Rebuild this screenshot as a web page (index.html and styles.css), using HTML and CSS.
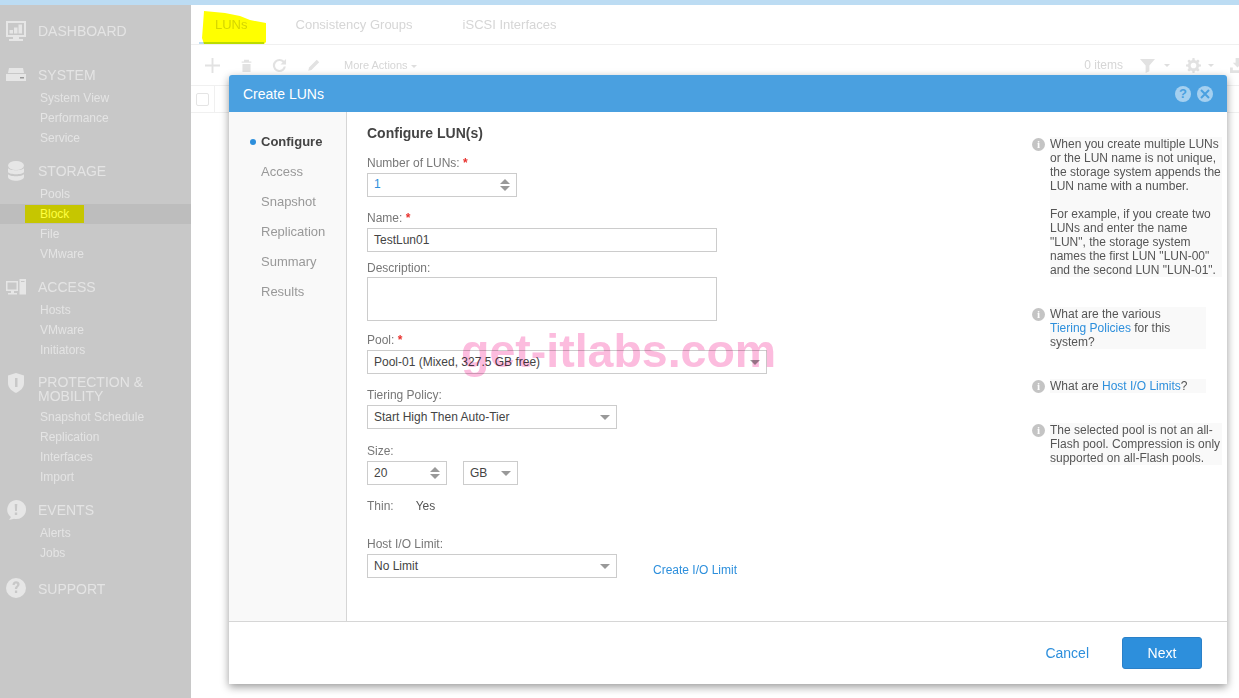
FILE: index.html
```html
<!DOCTYPE html>
<html lang="en">

<head>
  <meta charset="UTF-8">
  <meta name="viewport" content="width=device-width, initial-scale=1.0">
  <title>Create LUNs</title>
  <link rel="stylesheet" href="styles.css">
</head>

<body>
  <div class="top-strip"></div>

  <div class="page">
    <!-- left menu -->
    <nav class="sidebar">
      <div class="menu-section section-lone">
        <div class="menu-head">
          <svg class="menu-icon" viewBox="0 0 20 20"><path d="M0 0h20v16h-7v2h4v2H3v-2h4v-2H0zM2 2v12h16V2zM3.500 12.500V9h3.500v3.500zM8 12.500V6.500h3.500v6zM12.500 12.500V3.500H16v9z" fill-rule="evenodd"/></svg>
          <span>DASHBOARD</span>
        </div>
      </div>
      <div class="menu-section">
        <div class="menu-head">
          <svg class="menu-icon" viewBox="0 0 20 20"><path d="M3 3h14l1 5H2zM0 9h20v7H0z"/><rect x="14" y="12" width="4" height="1.500" fill="#999"/></svg>
          <span>SYSTEM</span>
        </div>
        <a class="menu-item">System View</a>
        <a class="menu-item">Performance</a>
        <a class="menu-item">Service</a>
      </div>
      <div class="menu-section">
        <div class="menu-head">
          <svg class="menu-icon" viewBox="0 0 20 20"><ellipse cx="10" cy="4.500" rx="8" ry="4.500"/><path d="M2 7c1 3 15 3 16 0v4c-1 3-15 3-16 0zM2 13c1 3 15 3 16 0v3c-1 5-15 5-16 0z"/></svg>
          <span>STORAGE</span>
        </div>
        <a class="menu-item">Pools</a>
        <a class="menu-item menu-item-active">Block</a>
        <a class="menu-item">File</a>
        <a class="menu-item">VMware</a>
      </div>
      <div class="menu-section">
        <div class="menu-head">
          <svg class="menu-icon" viewBox="0 0 20 20"><path d="M0 4h12v10H8v2h3v1.500H2V16h3v-2H0zM1.500 5.500v7h9v-7z" fill-rule="evenodd"/><path d="M13.500 2H20v15.500h-6.500zM15 4v1h3.500V4z" fill-rule="evenodd"/></svg>
          <span>ACCESS</span>
        </div>
        <a class="menu-item">Hosts</a>
        <a class="menu-item">VMware</a>
        <a class="menu-item">Initiators</a>
      </div>
      <div class="menu-section section-wrap">
        <div class="menu-head">
          <svg class="menu-icon" viewBox="0 0 20 20"><path d="M2 2.500 10 0l8 2.500V10c0 5-4 8-8 10-4-2-8-5-8-10zM9 5v9h2.500V5z" fill-rule="evenodd"/></svg>
          <span>PROTECTION &amp; MOBILITY</span>
        </div>
        <a class="menu-item">Snapshot Schedule</a>
        <a class="menu-item">Replication</a>
        <a class="menu-item">Interfaces</a>
        <a class="menu-item">Import</a>
      </div>
      <div class="menu-section">
        <div class="menu-head">
          <svg class="menu-icon" viewBox="0 0 20 20"><path d="M10 0a10 9.500 0 1 1-2 18.800L3 20l2-3A9.500 9.500 0 0 1 10 0zM8.700 4l.4 7h1.800l.4-7zM8.800 12.500v2.500h2.400v-2.500z" fill-rule="evenodd"/></svg>
          <span>EVENTS</span>
        </div>
        <a class="menu-item">Alerts</a>
        <a class="menu-item">Jobs</a>
      </div>
      <div class="menu-section section-last">
        <div class="menu-head">
          <svg class="menu-icon" viewBox="0 0 20 20"><path d="M10 0a10 10 0 1 1 0 20 10 10 0 0 1 0-20zM6.500 7h2.300c0-1 .5-1.500 1.200-1.500s1.200.4 1.200 1.100c0 1.400-2.300 1.700-2.300 4.400h2.200c0-2 2.500-2.300 2.500-4.700 0-1.800-1.500-3-3.500-3-2.200 0-3.600 1.400-3.600 3.700zM8.900 12.500V15h2.300v-2.500z" fill-rule="evenodd"/></svg>
          <span>SUPPORT</span>
        </div>
      </div>
    </nav>

    <!-- page behind the dialog -->
    <main class="content">
      <div class="tabs">
        <a class="tab tab-active">LUNs</a>
        <a class="tab">Consistency Groups</a>
        <a class="tab">iSCSI Interfaces</a>
      </div>
      <div class="toolbar">
        <svg class="tool-icon" viewBox="0 0 16 16"><path d="M7 0h2v7h7v2H9v7H7V9H0V7h7z"/></svg>
        <svg class="tool-icon tool-small" viewBox="0 0 16 16"><path d="M5 1h6v2h3v1.500H2V3h3zM3 6h10v10H3z"/></svg>
        <svg class="tool-icon" viewBox="0 0 16 16"><path d="M8 1a7 7 0 0 1 5 2l2-2v6H9l2.300-2.300A4.700 4.700 0 1 0 12.500 9h2.300A7 7 0 1 1 8 1z"/></svg>
        <svg class="tool-icon tool-small" viewBox="0 0 16 16"><path d="M12 1l3 3-9.500 9.500-4 1 1-4z"/></svg>
        <span class="more-actions">More Actions <i class="caret"></i></span>
        <div class="toolbar-right">
          <span class="item-count">0 items</span>
          <svg class="tool-icon tool-filter" viewBox="0 0 16 16"><path d="M0 1h16L10 8v6l-4 2V8z"/></svg>
          <i class="caret"></i>
          <svg class="tool-icon tool-gear" viewBox="0 0 16 16"><path d="M7 0h2l.4 2.200 1.500.6L12.800 1.500l1.700 1.700-1.300 1.900.6 1.500 2.200.4v2l-2.200.4-.6 1.500 1.300 1.900-1.700 1.700-1.900-1.300-1.500.6L9 16H7l-.4-2.200-1.500-.6-1.900 1.300-1.700-1.700 1.300-1.900-.6-1.500L0 9V7l2.200-.4.600-1.500-1.300-1.900 1.700-1.700 1.900 1.300 1.500-.6zM8 5a3 3 0 1 0 0 6 3 3 0 0 0 0-6z" fill-rule="evenodd"/></svg>
          <i class="caret"></i>
          <svg class="tool-icon tool-export" viewBox="0 0 16 16"><path d="M6 0h4v5h3l-5 5-5-5h3zM0 10h3v3h10v-3h3v6H0z"/></svg>
        </div>
      </div>
      <div class="table-head">
        <div class="check-cell"><span class="checkbox"></span></div>
      </div>
    </main>
  </div>

  <!-- yellow marker strokes drawn over the screenshot -->
  <svg class="marker marker-tab" viewBox="0 0 67 35"><path d="M4 1 25 3 40 6 50 10 66 13 66 32 64 34H4L2 28 3 15z"/></svg>
  <div class="marker-block"><span>Block</span></div>

  <!-- Create LUNs dialog -->
  <section class="modal">
    <header class="modal-head">
      <h1>Create LUNs</h1>
      <div class="modal-tools">
        <span class="round-btn">?</span>
        <span class="round-btn round-close">
          <svg viewBox="0 0 10 10"><path d="M1 1l8 8M9 1L1 9"/></svg>
        </span>
      </div>
    </header>

    <div class="modal-body">
      <ul class="steps">
        <li class="step step-current">Configure</li>
        <li class="step">Access</li>
        <li class="step">Snapshot</li>
        <li class="step">Replication</li>
        <li class="step">Summary</li>
        <li class="step">Results</li>
      </ul>

      <form class="form">
        <h2>Configure LUN(s)</h2>

        <div class="field">
          <label>Number of LUNs: <b class="req">*</b></label>
          <div class="input w-150 input-blue">1<i class="spinner"></i></div>
        </div>
        <div class="field field-name">
          <label>Name: <b class="req">*</b></label>
          <div class="input w-350">TestLun01</div>
        </div>
        <div class="field field-desc">
          <label>Description:</label>
          <div class="input w-350 textarea"></div>
        </div>
        <div class="field field-pool">
          <label>Pool: <b class="req">*</b></label>
          <div class="input w-400 select">Pool-01 (Mixed, 327.5 GB free)</div>
        </div>
        <div class="field field-tier">
          <label>Tiering Policy:</label>
          <div class="input w-250 select">Start High Then Auto-Tier</div>
        </div>
        <div class="field">
          <label>Size:</label>
          <div class="size-row">
            <div class="input w-80">20<i class="spinner"></i></div>
            <div class="input w-55 select">GB</div>
          </div>
        </div>
        <div class="field field-thin">
          <label>Thin:</label>
          <span class="thin-value">Yes</span>
        </div>
        <div class="field">
          <label>Host I/O Limit:</label>
          <div class="limit-row">
            <div class="input w-250 select">No Limit</div>
            <a class="link limit-link">Create I/O Limit</a>
          </div>
        </div>
      </form>

      <aside class="help">
        <div class="help-item">
          <span class="info">i</span>
          <div class="help-text">When you create multiple LUNs or the LUN name is not unique, the storage system appends the LUN name with a number.<br><br>For example, if you create two LUNs and enter the name "LUN", the storage system names the first LUN "LUN-00" and the second LUN "LUN-01".</div>
        </div>
        <div class="help-item">
          <span class="info">i</span>
          <div class="help-text help-short">What are the various<br><a class="link">Tiering Policies</a> for this system?</div>
        </div>
        <div class="help-item">
          <span class="info">i</span>
          <div class="help-text help-short">What are <a class="link">Host I/O Limits</a>?</div>
        </div>
        <div class="help-item">
          <span class="info">i</span>
          <div class="help-text">The selected pool is not an all-Flash pool. Compression is only supported on all-Flash pools.</div>
        </div>
      </aside>
    </div>

    <footer class="modal-foot">
      <a class="cancel">Cancel</a>
      <button class="next" type="button">Next</button>
    </footer>
  </section>

  <div class="watermark">get-itlabs.com</div>
</body>

</html>
```

FILE: styles.css
```css
body {
  font-family: "Liberation Sans", Arial, sans-serif;
  margin: 0;
  padding: 0;
  width: 1239px;
  height: 698px;
  overflow: hidden;
  background: #fff;
  position: relative;
}

.top-strip {
  height: 5px;
  background-color: #bcdcf3;
}

.page {
  display: flex;
  height: 693px;
}

/* Sidebar */
.sidebar {
  width: 191px;
  flex: none;
  background-color: #c8c8c8;
  padding-top: 16px;
  box-sizing: border-box;
}

.menu-section {
  margin-bottom: 13px;
}

.section-lone {
  margin-bottom: 24px;
}

.menu-head {
  display: flex;
  align-items: center;
  height: 20px;
  margin-bottom: 3px;
  padding-left: 6px;
  font-size: 14px;
  color: #e4e4e4;
}

.menu-head span {
  margin-left: 12px;
}

.menu-icon {
  width: 20px;
  height: 20px;
  fill: #e6e6e6;
  flex: none;
}

.section-wrap {
  margin-top: 15px;
}

.section-wrap .menu-head {
  height: 28px;
  line-height: 14px;
  margin-bottom: 4px;
  align-items: flex-start;
}

.section-wrap .menu-head span {
  width: 140px;
}

.section-wrap .menu-icon {
  margin-top: -2px;
}

.section-last {
  margin-top: 16px;
}

.section-last .menu-icon {
  margin-top: -2px;
}

.menu-item {
  display: block;
  height: 20px;
  line-height: 20px;
  padding-left: 40px;
  font-size: 12px;
  color: #e4e4e4;
}

.menu-item-active {
  background-color: #bdbdbd;
}

/* Page behind the dialog */
.content {
  flex: 1;
  background-color: #fff;
}

.tabs {
  display: flex;
  height: 39px;
  border-bottom: 1px solid #f0f0f0;
  padding-left: 8px;
}

.tab {
  line-height: 40px;
  color: #d6d6d6;
  padding: 0 16px;
  margin-right: 18px;
  font-size: 13px;
}

.tab-active {
  height: 37px;
  border-bottom: 2px solid #bcdcf3;
  margin-right: 16px;
}

.toolbar {
  display: flex;
  align-items: center;
  height: 40px;
  padding-left: 14px;
  border-bottom: 1px solid #f0f0f0;
}

.tool-icon {
  width: 15px;
  height: 15px;
  fill: #e2e2e2;
  margin-right: 19px;
  flex: none;
}

.tool-small {
  width: 13px;
  height: 13px;
  margin-left: 1px;
}

.more-actions {
  font-size: 11px;
  color: #d6d6d6;
  margin-left: 5px;
}

.caret {
  display: inline-block;
  width: 0;
  height: 0;
  border-left: 3px solid transparent;
  border-right: 3px solid transparent;
  border-top: 3px solid #dedede;
  vertical-align: middle;
}

.toolbar-right {
  display: flex;
  align-items: center;
  margin-left: auto;
  margin-right: -6px;
}

.item-count {
  font-size: 12px;
  color: #d6d6d6;
  margin-right: 17px;
}

.tool-filter {
  margin-right: 9px;
}

.tool-gear {
  margin: 0 7px 0 16px;
}

.tool-export {
  margin: 0 0 0 16px;
}

.table-head {
  display: flex;
  height: 26px;
  border-bottom: 1px solid #f0f0f0;
}

.check-cell {
  width: 24px;
  display: flex;
  align-items: center;
  justify-content: center;
  border-right: 1px solid #f0f0f0;
  box-sizing: border-box;
}

.checkbox {
  width: 11px;
  height: 11px;
  border: 1px solid #e4e4e4;
  border-radius: 2px;
}

/* Yellow marker strokes */
.marker {
  position: absolute;
  left: 200px;
  top: 10px;
  width: 67px;
  height: 35px;
  fill: #ffff00;
  mix-blend-mode: multiply;
}

.marker-block {
  position: absolute;
  left: 25px;
  top: 205px;
  width: 59px;
  height: 18px;
  background-color: #c6c600;
  padding-left: 15px;
  box-sizing: border-box;
  font-size: 12px;
  line-height: 18px;
  color: #ffff40;
}

/* Dialog */
.modal {
  position: absolute;
  left: 229px;
  top: 75px;
  width: 998px;
  height: 609px;
  display: flex;
  flex-direction: column;
  background-color: #fff;
  border-radius: 3px 3px 0 0;
  box-shadow: 0 3px 9px rgba(0, 0, 0, 0.4);
}

.modal-head {
  display: flex;
  align-items: center;
  justify-content: space-between;
  height: 37px;
  padding: 0 14px;
  flex: none;
  background-color: #4aa0e0;
  border-radius: 3px 3px 0 0;
}

.modal-head h1 {
  margin: 0;
  font-size: 14px;
  font-weight: normal;
  color: #fff;
}

.modal-tools {
  display: flex;
  gap: 6px;
}

.round-btn {
  display: flex;
  align-items: center;
  justify-content: center;
  width: 16px;
  height: 16px;
  border-radius: 50%;
  background-color: #a5d0f0;
  color: #4aa0e0;
  font-size: 13px;
  font-weight: bold;
}

.round-btn svg {
  width: 10px;
  height: 10px;
  stroke: #4aa0e0;
  stroke-width: 2;
}

.modal-body {
  display: flex;
  flex: 1;
  min-height: 0;
}

.steps {
  list-style: none;
  margin: 0;
  padding: 15px 0 0 0;
  width: 118px;
  flex: none;
  box-sizing: border-box;
  background-color: #f9f9f9;
  border-right: 1px solid #d6d6d6;
}

.step {
  height: 30px;
  line-height: 30px;
  padding-left: 32px;
  font-size: 13px;
  color: #999;
  position: relative;
}

.step-current {
  color: #444;
  font-weight: bold;
}

.step-current::before {
  content: "";
  position: absolute;
  left: 21px;
  top: 12px;
  width: 6px;
  height: 6px;
  border-radius: 50%;
  background-color: #2d8fdc;
}

/* Form */
.form {
  width: 685px;
  flex: none;
  padding: 13px 0 0 20px;
  box-sizing: border-box;
  font-size: 12px;
  color: #444;
}

.form h2 {
  margin: 0 0 15px;
  font-size: 14px;
  line-height: 16px;
  color: #444;
}

.field {
  margin-bottom: 14px;
}

.field label {
  display: block;
  height: 14px;
  line-height: 14px;
  margin-bottom: 3px;
  color: #777;
}

.field-name {
  margin-bottom: 9px;
}

.field-desc {
  margin-bottom: 12px;
}

.field-desc label {
  margin-bottom: 2px;
}

.field-pool {
  margin-bottom: 14px;
}

.field-tier {
  margin-bottom: 15px;
}

.field-thin {
  display: flex;
  margin-bottom: 21px;
}

.thin-value {
  margin-left: 22px;
  line-height: 15px;
  color: #555;
}

.req {
  color: #e8322e;
}

.input {
  position: relative;
  height: 24px;
  line-height: 23px;
  padding-left: 6px;
  box-sizing: border-box;
  border: 1px solid #ccc;
  background-color: #fff;
  color: #444;
}

.input-blue {
  color: #2d8fdc;
  line-height: 21px;
}

.textarea {
  height: 44px;
}

.w-150 {
  width: 150px;
}

.w-350 {
  width: 350px;
}

.w-400 {
  width: 400px;
}

.w-250 {
  width: 250px;
}

.w-80 {
  width: 80px;
}

.w-55 {
  width: 55px;
}

.select::after {
  content: "";
  position: absolute;
  right: 6px;
  top: 9px;
  border-left: 5px solid transparent;
  border-right: 5px solid transparent;
  border-top: 5px solid #999;
}

.spinner {
  position: absolute;
  right: 6px;
  top: 5px;
  width: 10px;
  height: 12px;
}

.spinner::before,
.spinner::after {
  content: "";
  position: absolute;
  left: 0;
  border-left: 5px solid transparent;
  border-right: 5px solid transparent;
}

.spinner::before {
  top: 0;
  border-bottom: 5px solid #999;
}

.spinner::after {
  bottom: 0;
  border-top: 5px solid #999;
}

.size-row {
  display: flex;
  gap: 16px;
}

.limit-row {
  display: flex;
  gap: 36px;
}

.link {
  color: #2d8fdc;
}

.limit-link {
  line-height: 33px;
}

/* Help column */
.help {
  flex: 1;
  padding: 25px 0 0 0;
  font-size: 12px;
  line-height: 14px;
  color: #555;
}

.help-item {
  display: flex;
  margin-bottom: 30px;
}

.info {
  width: 13px;
  height: 13px;
  margin: 1px 5px 0 0;
  flex: none;
  border-radius: 50%;
  background-color: #c4c4c4;
  color: #fff;
  font-family: "Liberation Serif", serif;
  font-weight: bold;
  font-size: 11px;
  line-height: 13px;
  text-align: center;
}

.help-text {
  width: 172px;
  background-color: #f9f9f9;
}

.help-short {
  width: 156px;
}

/* Footer */
.modal-foot {
  display: flex;
  align-items: center;
  justify-content: flex-end;
  height: 62px;
  flex: none;
  padding-right: 25px;
  border-top: 1px solid #d6d6d6;
}

.cancel {
  font-size: 14px;
  color: #2d8fdc;
  margin-right: 33px;
}

.next {
  width: 80px;
  height: 32px;
  padding: 0;
  font-family: inherit;
  font-size: 14px;
  color: #fff;
  background-color: #2d8fdc;
  border: 1px solid #2a80c8;
  border-radius: 3px;
}

.watermark {
  position: absolute;
  left: 461px;
  top: 326px;
  font-size: 46.500px;
  line-height: 50px;
  font-weight: bold;
  color: #fcbcde;
  mix-blend-mode: multiply;
  white-space: nowrap;
}
```
